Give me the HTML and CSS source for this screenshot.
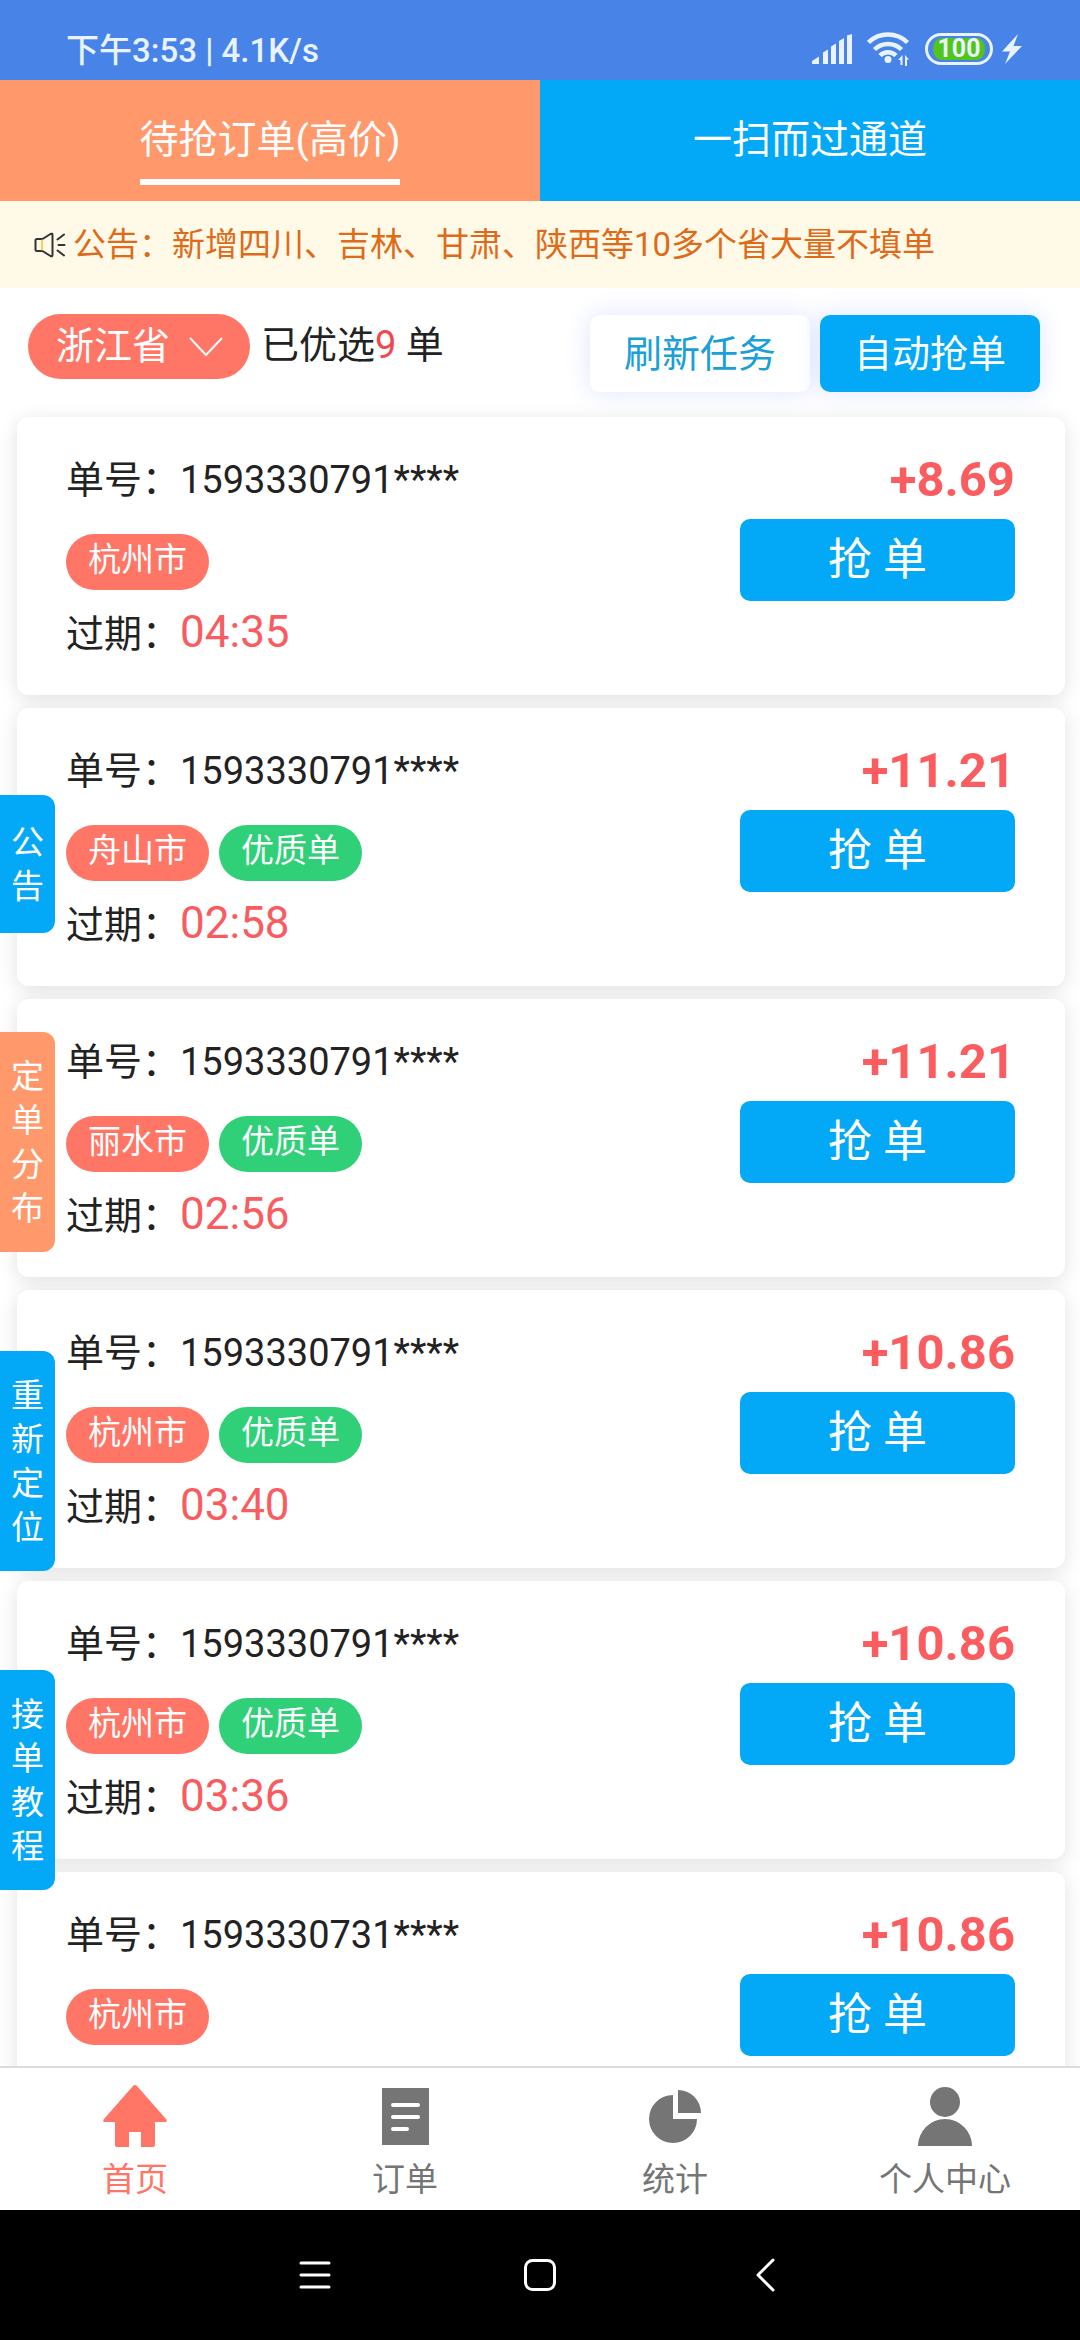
FILE: index.html
```html
<!DOCTYPE html>
<html lang="zh-CN">
<head>
<meta charset="utf-8">
<meta name="viewport" content="width=device-width, initial-scale=1">
<title>待抢订单</title>
<link rel="stylesheet" href="styles.css">
</head>
<body>
<div class="app">
  <header class="status">
    <span class="status-text">下午3:53 | 4.1K/s</span>
    <div class="status-icons">
      <svg class="signal" viewBox="0 0 40 30" width="40" height="30" aria-hidden="true"><path d="M0 30v-3l7-4.500v7.500zM11 30V18.500l5-3V30zM19 30V12.500l5-3V30zM27 30V7l5-3v26zM35 30V1.500L40 0v30z"/></svg>
      <svg class="wifi" viewBox="0 0 43 36" width="43" height="36" aria-hidden="true"><g fill="none" stroke="currentColor" stroke-width="4.500"><path d="M1.500 11.500a28 28 0 0 1 39 0"/><path d="M7.500 18.500a19.500 19.500 0 0 1 27 0"/><path d="M13 24.500a11.500 11.500 0 0 1 16 0"/></g><circle cx="21" cy="28.500" r="3.500"/><path d="M35.500 24v10h-2v-5H31zM38 35V24l4 4.500h-2V35z"/></svg>
      <span class="battery">100</span>
      <svg class="bolt" viewBox="0 0 20 30" width="20" height="30" aria-hidden="true"><path d="M16 0L0 17.500h8L3 30l17-18h-8.500z"/></svg>
    </div>
  </header>

  <nav class="tabs">
    <a class="tab tab-active" href="#orders"><span class="tab-label">待抢订单(高价)</span></a>
    <a class="tab" href="#scan"><span class="tab-label">一扫而过通道</span></a>
  </nav>

  <div class="notice">
    <svg viewBox="0 0 32 26" width="32" height="26" fill="none" stroke="#333" stroke-width="2" stroke-linecap="round" stroke-linejoin="round" aria-hidden="true"><path d="M1.500 8.500Q1.500 7 3 7h5.500l8-5q2-1 2 1v20q0 2-2 1l-8-5H3q-1.500 0-1.500-1.500z"/><path d="M8 8.500v9" stroke="#f0d264"/><path d="M23.500 7.500l6.500-5M24.500 13H30.500M23.500 18.500l6.500 5"/></svg>
    <span class="notice-text">公告：新增四川、吉林、甘肃、陕西等10多个省大量不填单</span>
  </div>

  <div class="toolbar">
    <div class="province">
      <select class="province-select" aria-label="省份"><option>浙江省</option></select>
      <svg class="province-arrow" viewBox="0 0 34 20" width="34" height="20" fill="none" stroke="#fff" stroke-width="2" aria-hidden="true"><path d="M1 1l16 17L33 1"/></svg>
    </div>
    <p class="picked">已优选<span class="picked-count">9</span> 单</p>
    <div class="actions">
      <button class="action" type="button">刷新任务</button>
      <button class="action action-primary" type="button">自动抢单</button>
    </div>
  </div>

  <main class="orders">
    <article class="order">
      <div class="info">
        <p class="line">单号：1593330791****</p>
        <div class="tags"><span class="tag">杭州市</span></div>
        <p class="line">过期：<span class="time">04:35</span></p>
      </div>
      <div class="side"><p class="price">+8.69</p><button class="grab" type="button">抢 单</button></div>
    </article>
    <article class="order">
      <div class="info">
        <p class="line">单号：1593330791****</p>
        <div class="tags"><span class="tag">舟山市</span><span class="tag tag-good">优质单</span></div>
        <p class="line">过期：<span class="time">02:58</span></p>
      </div>
      <div class="side"><p class="price">+11.21</p><button class="grab" type="button">抢 单</button></div>
    </article>
    <article class="order">
      <div class="info">
        <p class="line">单号：1593330791****</p>
        <div class="tags"><span class="tag">丽水市</span><span class="tag tag-good">优质单</span></div>
        <p class="line">过期：<span class="time">02:56</span></p>
      </div>
      <div class="side"><p class="price">+11.21</p><button class="grab" type="button">抢 单</button></div>
    </article>
    <article class="order">
      <div class="info">
        <p class="line">单号：1593330791****</p>
        <div class="tags"><span class="tag">杭州市</span><span class="tag tag-good">优质单</span></div>
        <p class="line">过期：<span class="time">03:40</span></p>
      </div>
      <div class="side"><p class="price">+10.86</p><button class="grab" type="button">抢 单</button></div>
    </article>
    <article class="order">
      <div class="info">
        <p class="line">单号：1593330791****</p>
        <div class="tags"><span class="tag">杭州市</span><span class="tag tag-good">优质单</span></div>
        <p class="line">过期：<span class="time">03:36</span></p>
      </div>
      <div class="side"><p class="price">+10.86</p><button class="grab" type="button">抢 单</button></div>
    </article>
    <article class="order">
      <div class="info">
        <p class="line">单号：1593330731****</p>
        <div class="tags"><span class="tag">杭州市</span></div>
      </div>
      <div class="side"><p class="price">+10.86</p><button class="grab" type="button">抢 单</button></div>
    </article>
  </main>

  <nav class="bottom-nav">
    <a class="nav-item nav-current" href="#home">
      <svg viewBox="0 0 64 62" width="64" height="62" aria-hidden="true"><path d="M32 0q1 0 2 1l29 33q2 3-1 3H52v23q0 2-2 2H38V47H26v15H14q-2 0-2-2V37H2q-3 0-1-3L30 1q1-1 2-1z"/></svg>
      <span>首页</span>
    </a>
    <a class="nav-item" href="#list">
      <svg viewBox="0 0 64 62" width="64" height="62" aria-hidden="true"><path d="M9 3h47v57H9z"/><path d="M20 20h25M20 32h25M20 44h14" stroke="#fff" stroke-width="4" stroke-linecap="round"/></svg>
      <span>订单</span>
    </a>
    <a class="nav-item" href="#stats">
      <svg viewBox="0 0 64 62" width="64" height="62" aria-hidden="true"><path d="M30 10v24h24A24 24 0 1 1 30 10z"/><path d="M35 5a23 23 0 0 1 23 23H35z"/></svg>
      <span>统计</span>
    </a>
    <a class="nav-item" href="#me">
      <svg viewBox="0 0 64 62" width="64" height="62" aria-hidden="true"><circle cx="32" cy="17" r="15"/><path d="M5 61a27 27 0 0 1 54 0z"/></svg>
      <span>个人中心</span>
    </a>
  </nav>

  <aside class="rail">
    <button class="rail-tab" type="button">公告</button>
    <button class="rail-tab rail-warm" type="button">定单分布</button>
    <button class="rail-tab" type="button">重新定位</button>
    <button class="rail-tab" type="button">接单教程</button>
  </aside>
</div>

<footer class="system-nav">
  <button class="key" type="button" aria-label="菜单"><svg viewBox="0 0 34 34" width="34" height="34"><path d="M3 5h28M3 17h28M3 29h28"/></svg></button>
  <button class="key" type="button" aria-label="主屏幕"><svg viewBox="0 0 34 34" width="34" height="34"><rect x="2.500" y="2.500" width="29" height="29" rx="7"/></svg></button>
  <button class="key" type="button" aria-label="返回"><svg viewBox="0 0 34 34" width="34" height="34"><path d="M25 2L10 17l15 15"/></svg></button>
</footer>
</body>
</html>
```

FILE: styles.css
```css
:root {
  --blue: #03a9f7;
  --orange: #ff986b;
  --coral: #ff7566;
  --green: #30d078;
  --text: #222;
}

* {
  box-sizing: border-box;
}

body {
  margin: 0;
  height: 100vh;
  display: flex;
  flex-direction: column;
  background: #fff;
  color: var(--text);
  font-family: Roboto, "Noto Sans CJK SC", sans-serif;
  font-size: 38px;
}

p {
  margin: 0;
}

a {
  color: inherit;
  text-decoration: none;
}

button,
select {
  border: 0;
  padding: 0;
  color: inherit;
  background: none;
  font: inherit;
}

.app {
  position: relative;
  flex: 1;
  min-height: 0;
  display: flex;
  flex-direction: column;
}

/* Status bar */
.status {
  flex: none;
  height: 80px;
  padding: 18px 58px 0 66px;
  display: flex;
  justify-content: space-between;
  align-items: center;
  background: #4884e8;
  color: #e8f3ff;
  font-size: 33px;
  font-weight: 500;
}

.status-text {
  padding-bottom: 3px;
}

.status-icons {
  display: flex;
  align-items: center;
  gap: 15px;
}

.status-icons svg {
  fill: currentColor;
}

.battery {
  width: 68px;
  height: 32px;
  border: 3px solid currentColor;
  border-radius: 16px;
  padding: 2px 5px;
  background: #52c41a content-box;
  font-size: 25px;
  line-height: 22px;
  font-weight: 700;
  text-align: center;
}

.battery + .bolt {
  margin-left: -6px;
}

/* Channel tabs */
.tabs {
  flex: none;
  display: flex;
  font-size: 39px;
}

.tab {
  flex: 1;
  height: 121px;
  padding-top: 32px;
  display: flex;
  justify-content: center;
  align-items: flex-start;
  background: var(--blue);
  color: #fff;
}

.tab-active {
  background: var(--orange);
}

.tab-label {
  padding-bottom: 11px;
  line-height: 56px;
  border-bottom: 6px solid transparent;
}

.tab-active .tab-label {
  border-color: #fff;
}

/* Announcement strip */
.notice {
  flex: none;
  height: 87px;
  padding: 0 34px;
  display: flex;
  align-items: center;
  gap: 7px;
  background: #fffae8;
  color: #de6b1a;
  font-size: 33px;
}

.notice-text {
  padding-bottom: 6px;
}

/* Filter row */
.toolbar {
  flex: none;
  padding: 26px 40px 25px 28px;
  display: flex;
  align-items: flex-start;
}

.province {
  display: grid;
  align-items: center;
}

.province-select,
.province-arrow {
  grid-area: 1 / 1;
}

.province-select {
  appearance: none;
  width: 222px;
  height: 65px;
  padding: 0 28px 2px;
  border-radius: 33px;
  background: var(--coral);
  color: #fff;
}

.province-arrow {
  justify-self: end;
  margin-right: 27px;
  pointer-events: none;
}

.picked {
  margin-left: 11px;
  line-height: 63px;
}

.picked-count {
  color: #f0484e;
}

.actions {
  margin: 1px 0 0 auto;
  display: flex;
  gap: 10px;
}

.action {
  width: 220px;
  height: 77px;
  padding-bottom: 7px;
  border-radius: 10px;
  background: #fff;
  color: #1a9fd8;
  box-shadow: 0 0 24px rgba(70, 110, 255, 0.18);
}

.action-primary {
  background: var(--blue);
  color: #fff;
}

/* Order list */
.orders {
  flex: 1;
  min-height: 0;
  overflow-y: auto;
  scrollbar-width: none;
  margin-top: -24px;
  padding: 24px 15px 0 17px;
  display: flex;
  flex-direction: column;
  gap: 13px;
}

.order {
  flex: none;
  min-height: 278px;
  padding: 35px 50px 32px 49px;
  display: flex;
  justify-content: space-between;
  border-radius: 12px;
  background: #fff;
  box-shadow: 0 4px 20px rgba(0, 0, 0, 0.12);
}

.line,
.price {
  line-height: 56px;
}

.tags {
  margin: 26px 0 16px;
  display: flex;
  gap: 10px;
}

.tag {
  width: 143px;
  height: 56px;
  border-radius: 28px;
  background: var(--coral);
  color: #fff;
  font-size: 33px;
  line-height: 52px;
  text-align: center;
}

.tag-good {
  background: var(--green);
}

.time {
  color: #f95c60;
  font-size: 44px;
  line-height: 44px;
}

.side {
  width: 275px;
}

.price {
  color: #fb5c60;
  font-size: 49px;
  font-weight: 700;
  text-align: right;
}

.grab {
  width: 100%;
  height: 82px;
  margin-top: 11px;
  padding-bottom: 8px;
  border-radius: 10px;
  background: var(--blue);
  color: #fff;
  font-size: 44px;
}

/* Floating shortcuts over the list */
.rail {
  position: absolute;
  left: 0;
  top: 795px;
  display: flex;
  flex-direction: column;
  gap: 99px;
}

.rail-tab {
  width: 55px;
  min-height: 138px;
  padding: 23px 11px 21px;
  border-radius: 0 12px 12px 0;
  background: var(--blue);
  color: #fff;
  font-size: 33px;
  line-height: 44px;
}

.rail-warm {
  background: var(--orange);
}

/* Bottom navigation */
.bottom-nav {
  flex: none;
  height: 144px;
  padding-top: 17px;
  border-top: 2px solid #dcdcdc;
  display: flex;
  background: #fff;
}

.nav-item {
  flex: 1;
  display: flex;
  flex-direction: column;
  align-items: center;
  gap: 9px;
  color: #757575;
  font-size: 33px;
  line-height: 48px;
}

.nav-item svg {
  fill: currentColor;
}

.nav-current {
  color: var(--coral);
}

/* System keys */
.system-nav {
  flex: none;
  height: 130px;
  display: flex;
  justify-content: center;
  align-items: center;
  gap: 191px;
  background: #000;
}

.key svg {
  display: block;
  fill: none;
  stroke: #fff;
  stroke-width: 3;
  stroke-linecap: round;
  stroke-linejoin: round;
}
```
